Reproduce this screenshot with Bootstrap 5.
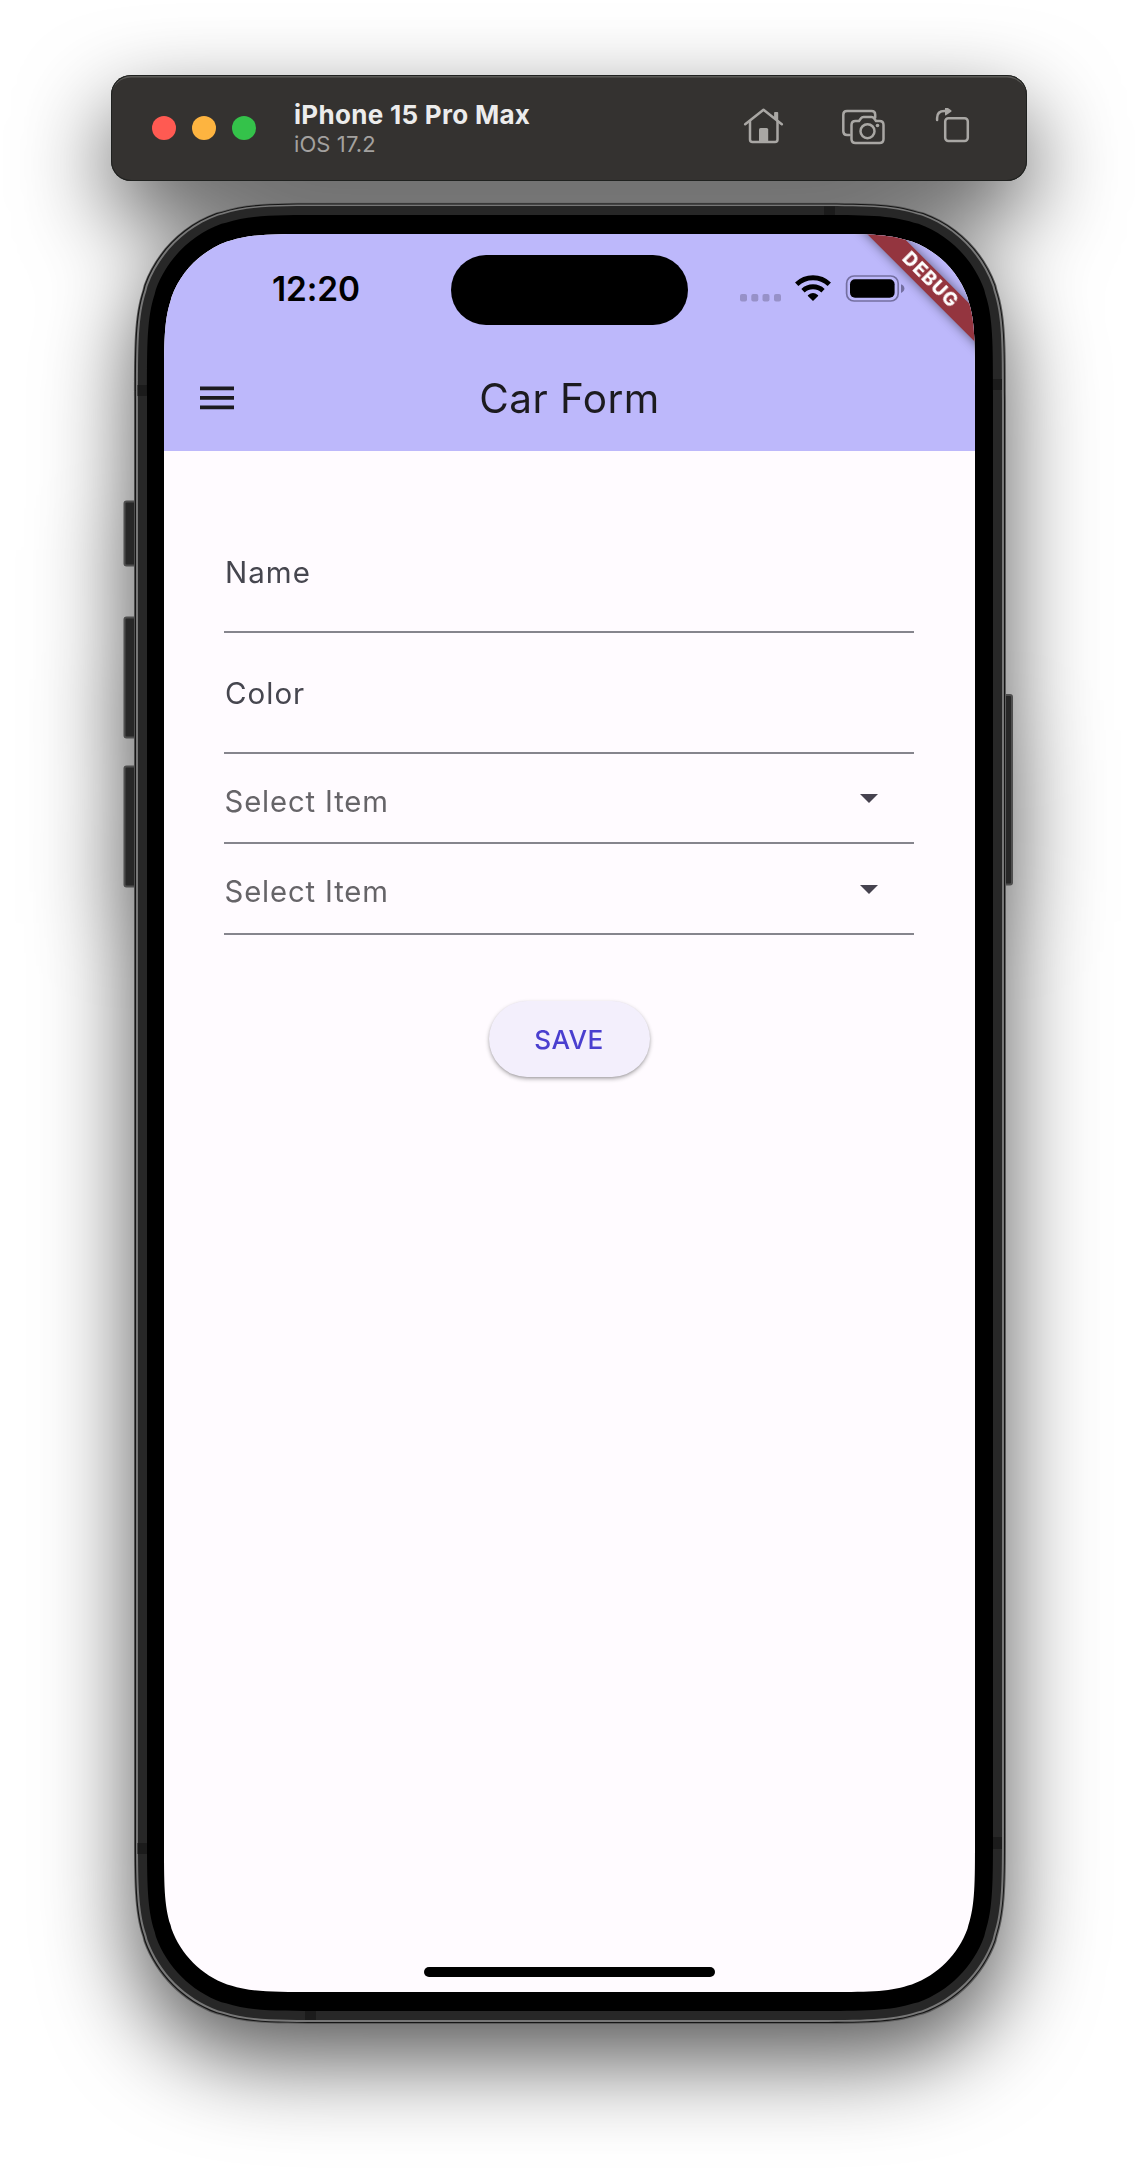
<!DOCTYPE html>
<html lang="en">
<head>
<meta charset="utf-8">
<meta name="viewport" content="width=device-width, initial-scale=1">
<title>Car Form</title>
<link rel="stylesheet" href="https://cdn.jsdelivr.net/npm/bootstrap@5.3.0/dist/css/bootstrap.min.css">
<style>
  body { background:#fff; font-family:Inter,"Liberation Sans",sans-serif; overflow:hidden; }
  .simulator { width:1138px; height:2174px; padding-top:75px; filter:drop-shadow(0 36px 45px rgba(0,0,0,.66)); }
  .toolbar { width:916px; height:106px; margin-left:111px; padding:0 41px; border-radius:20px; background:#343230; box-shadow:inset 0 0 0 1px #1f211f, inset 0 2.5px 0 #5b5a57; }
  .light { width:24px; height:24px; border-radius:50%; }
  .device-name { margin:2px 0 0 38px; }
  .device-name .model { font-size:26px; line-height:30px; font-weight:700; color:#ececec; letter-spacing:.3px; }
  .device-name .system { font-size:22px; line-height:28.8px; color:#a3a19f; letter-spacing:.1px; }
  .tool { stroke:#a9a7a4; fill:none; stroke-width:2.5; stroke-linecap:round; stroke-linejoin:round; }
  .tool .solid { fill:#a9a7a4; stroke:none; }
  .phone { width:872px; height:1821px; margin:21px 0 0 134px; padding:32px 31px 31px 30px; }
  .chassis { left:0; top:0; overflow:visible; }
  .screen { width:811px; height:1758px; background:#fffbff; overflow:hidden; }
  .topbar { height:216.5px; background:#bdb8fb; }
  .statusbar { display:grid; grid-template-columns:287px 237px 287px; height:110px; align-items:center; }
  .clock { padding-left:17px; font-size:33.4px; font-weight:600; line-height:40px; color:#000; letter-spacing:-.1px; }
  .island { height:70px; border-radius:35px; background:#000; margin-top:1px; }
  .indicators { padding-left:52px; gap:14px; }
  .appbar { display:grid; grid-template-columns:120px 1fr 120px; height:106.5px; align-items:center; }
  .app-title { padding-top:3px; font-size:40.5px; line-height:50px; letter-spacing:.45px; color:#1c1b1f; }
  .ribbon { width:220px; height:22.6px; left:655.2px; top:34.2px; padding-left:3px; line-height:22.6px; transform:rotate(45deg); background:#94353f; box-shadow:0 0 11px rgba(0,0,0,.5); color:#fff; font-size:18.8px; font-weight:800; letter-spacing:1px; }
  .car-form { padding:62px 61px 0 60px; }
  .field { border-bottom:2px solid #86858d; font-size:29.5px; line-height:36px; letter-spacing:1px; }
  .field-text { height:120.5px; padding:1px 0 0 1px; color:#46464f; }
  .field-pick { height:90.5px; color:#666468; padding:2px 36.5px 0 .5px; font-size:29.3px; letter-spacing:.85px; }
  .field-pick span { padding-top:6px; }
  .save { width:161px; height:76px; margin-top:66.5px; border-radius:38px; background:#f3effc; color:#4a3fcf; font-size:26.2px; font-weight:500; letter-spacing:.4px; box-shadow:0 2px 4px rgba(0,0,0,.3), 0 1px 2px rgba(0,0,0,.1); }
  .save span { display:block; padding-top:1px; }
  .home-line { width:291px; height:10px; border-radius:5px; background:#000; left:260px; bottom:15px; }
</style>
<script src="https://cdn.jsdelivr.net/npm/bootstrap@5.3.0/dist/js/bootstrap.bundle.min.js"></script>
</head>
<body>
<div class="simulator">
  <header class="toolbar d-flex align-items-center">
    <div class="d-flex gap-3">
      <span class="light" style="background:#ff5a52"></span>
      <span class="light" style="background:#fdb440"></span>
      <span class="light" style="background:#34c24a"></span>
    </div>
    <div class="device-name">
      <div class="model text-nowrap">iPhone 15 Pro Max</div>
      <div class="system">iOS 17.2</div>
    </div>
    <svg class="tool ms-auto" width="228" height="40" viewBox="743 108 228 40" style="margin-right:15px">
      <path d="M745.2 124.2 L763.5 109.8 L781.8 124.2"/>
      <path d="M750 121.5 V139.5 Q750 142 752.5 142 H775 Q777.5 142 777.5 139.5 V121.5"/>
      <path class="solid" d="M759 142 V129.6 Q759 128 760.6 128 H766.6 Q768.2 128 768.2 129.6 V142 Z"/>
      <path d="M775 112.8 H777.3 V119.5 L775 117.5 Z" stroke-width="1.8" fill="#a9a7a4"/>
      <path d="M849.5 135 H847 Q843.3 135 843.3 131.3 V114.7 Q843.3 111 847 111 H871.5 Q875.2 111 875.2 114.7 V117.5"/>
      <path d="M851.5 125 Q851.5 121 855.5 121 H859 L861 118.3 Q861.9 117 863.5 117 H871.5 Q873.1 117 874 118.3 L876 121 H879.5 Q883.5 121 883.5 125 V139 Q883.5 143 879.5 143 H855.5 Q851.5 143 851.5 139 Z"/>
      <circle cx="867.5" cy="131.2" r="7"/>
      <circle class="solid" cx="877.5" cy="125.5" r="1.8"/>
      <rect x="945.2" y="118.2" width="22.6" height="22.8" rx="3.2"/>
      <path d="M937.1 120 V118 Q937.1 111 944.5 111 H946"/>
      <path class="solid" d="M945 107.2 Q945 106.2 946 106.7 L951.2 110.2 Q952 111 951.2 111.7 L946 115.3 Q945 115.8 945 114.8 Z"/>
    </svg>
  </header>

  <main class="phone position-relative">
    <svg class="chassis position-absolute" width="872" height="1821" viewBox="0 0 872 1821">
      <g fill="#272727" stroke="#4e4e4e" stroke-width="2">
        <rect x="-9.5" y="299.5" width="14" height="64" rx="2"/>
        <rect x="-9.5" y="415.5" width="14" height="120" rx="2"/>
        <rect x="-9.5" y="564.5" width="14" height="120" rx="2"/>
        <rect x="866" y="493" width="12" height="189.5" rx="2"/>
      </g>
      <path fill="#5c5c5c" data-box="0 0.8 872 1822 130"/>
      <path fill="#151515" data-box="0.8 1.4 871 1821 129.5"/>
      <path fill="#777" data-box="2 2.4 870 1820 128.5"/>
      <path fill="#272727" data-box="4 4 868 1818 127"/>
      <g fill="#1b1b1b">
        <path d="M3.5 183h11v11h-11zM3.5 1641h11v11h-11zM858 177h10v11h-10zM858 1635h10v12h-10zM690 4.5h11v11h-11zM171 1807h11v11h-11z"/>
      </g>
      <path fill="#000" data-box="13 13 859 1809 118"/>
    </svg>
    <div class="screen position-relative" data-clip="100">
      <div class="topbar">
        <div class="statusbar">
          <div class="clock text-center">12:20</div>
          <div class="island"></div>
          <div class="indicators d-flex align-items-center">
            <svg width="41" height="28" fill="#9791c8"><rect x="0" y="19" width="7" height="7.5" rx="2"/><rect x="11.3" y="19" width="7" height="7.5" rx="2"/><rect x="22.5" y="19" width="7" height="7.5" rx="2"/><rect x="34" y="19" width="7" height="7.5" rx="2"/></svg>
            <svg width="36" height="28" viewBox="0 0 36 28" fill="none" stroke="#000" stroke-width="4.8"><path d="M1.7 9.3 A23.5 23.5 0 0 1 34.3 9.3"/><path d="M8 15.7 A14.6 14.6 0 0 1 28 15.7"/><path fill="#000" stroke="none" d="M18 26.1 L12.9 21 Q12.5 20.4 13.2 19.9 Q18 16.3 22.8 19.9 Q23.5 20.4 23.1 21 Z"/></svg>
            <svg width="60" height="28" viewBox="0 0 60 28"><rect x="1.6" y="1" width="51.6" height="25" rx="7.5" fill="none" stroke="#746fa0" stroke-width="1.7"/><rect x="5" y="4.2" width="44.6" height="18.6" rx="5"/><path fill="#746fa0" d="M56 9.2 Q59.4 10.5 59.4 13.5 Q59.4 16.5 56 17.9 Z"/></svg>
          </div>
        </div>
        <div class="appbar">
          <svg width="34" height="26" style="margin-left:36px" fill="#1c1b1f"><path d="M0 2.6h34v3.7H0zM0 12h34v3.7H0zM0 21.4h34v3.8H0z"/></svg>
          <div class="app-title text-center">Car Form</div>
        </div>
      </div>
      <div class="ribbon position-absolute text-center">DEBUG</div>
      <form class="car-form">
        <label class="field field-text d-flex align-items-center">Name</label>
        <label class="field field-text d-flex align-items-center">Color</label>
        <div class="field field-pick d-flex align-items-center justify-content-between"><span>Select Item</span><svg width="18" height="9" fill="#46424f"><path d="M0 0h18L9 9z"/></svg></div>
        <div class="field field-pick d-flex align-items-center justify-content-between"><span>Select Item</span><svg width="18" height="9" fill="#46424f"><path d="M0 0h18L9 9z"/></svg></div>
        <button type="button" class="save btn border-0 d-block mx-auto p-0"><span>SAVE</span></button>
      </form>
      <div class="home-line position-absolute"></div>
    </div>
  </main>
</div>
<script>
  // Continuous-curvature rounded rectangle, the corner shape of the handset.
  function roundedPath(x0, y0, x1, y1, r) {
    const pts = [[1.528665,0],[1.088493,0],[.868407,0],[.669934,.065496],[.631494,.074911],[.372824,.169059],[.169060,.372824],[.074911,.631494],[.065496,.669934],[0,.868407],[0,1.088493],[0,1.528665]];
    const corner = (cx, cy, sx, sy, back) => {
      const p = (back ? [...pts].reverse() : pts).map(([a, b]) => (cx + sx * a * r).toFixed(2) + ' ' + (cy + sy * b * r).toFixed(2));
      return `L${p[0]} C${p[1]} ${p[2]} ${p[3]} L${p[4]} C${p[5]} ${p[6]} ${p[7]} L${p[8]} C${p[9]} ${p[10]} ${p[11]} `;
    };
    const d = corner(x0, y0, 1, 1, true) + corner(x1, y0, -1, 1, false) + corner(x1, y1, -1, -1, true) + corner(x0, y1, 1, -1, false);
    return 'M' + d.slice(1) + 'Z';
  }
  document.querySelectorAll('[data-box]').forEach(p => p.setAttribute('d', roundedPath(...p.dataset.box.split(' ').map(Number))));
  document.querySelectorAll('[data-clip]').forEach(e => { e.style.clipPath = `path("${roundedPath(0, 0, e.offsetWidth, e.offsetHeight, +e.dataset.clip)}")`; });
</script>
</body>
</html>
